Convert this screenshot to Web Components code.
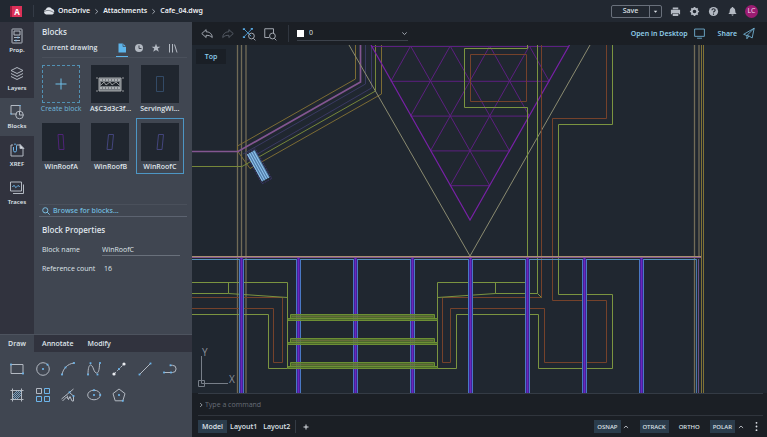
<!DOCTYPE html>
<html lang="en">
<head>
<meta charset="utf-8">
<title>Cafe_04.dwg</title>
<style>
html,body{margin:0;height:100%;background:#1b1f25}
body{font-family:"Open Sans","Noto Sans",sans-serif;font-size:7px;line-height:10px;color:#dfe3e9;
--head:#222831;--rail:#31333e;--panel:#404651;--bar:#1b1f25;--canvas:#202730;--blue:#6fb7dc;--line:#b3b9c2;--pill:#2b3c4b}
</style>
</head>
<body>
<cad-app></cad-app>
<script>
const base = `*{box-sizing:border-box}
button,input,select{font:inherit;color:inherit;background:none;border:0;padding:0;margin:0;border-radius:0;outline:0;min-width:0}
button{display:flex;align-items:center;justify-content:center}a{color:inherit;text-decoration:none}h2,h3{margin:0;font-size:8px;font-weight:600}`;

function define(name, css, html) {
  customElements.define(name, class extends HTMLElement {
    connectedCallback() {
      if (this.shadowRoot) return;
      const root = this.attachShadow({ mode: "open" });
      root.innerHTML = `<style>${base}${css}</style>${typeof html === "function" ? html(this) : html}`;
    }
  });
}

const dot = (x, y, c = "#6db5ea") => `<rect x="${x - .9}" y="${y - .9}" width="1.8" height="1.8" fill="${c}" stroke="none"/>`;
const icons = {
  prop: [16, `<rect x="3" y="1" width="10" height="14" rx=".5"/><path d="M5 3h6v4H5zM5 9.500h6M5 12.500h6"/><path d="M9 8.500v2M7 11.500v2" stroke="#6db5ea"/>`],
  layers: [16, `<path d="M8 1.500l6 3-6 3-6-3zM2 7.500l6 3 6-3M2 10.500l6 3 6-3"/>`],
  blocks: [16, `<path d="M8 10H2V1.500h9V7"/><circle cx="10.500" cy="11" r="3.800"/><path d="M10.500 7v4h4"/><path d="M1.200 10h1.600M10.200 1.500h1.600" stroke="#6db5ea"/>`],
  xref: [16, `<path d="M4 3H2V14H14V7M8 3h3.500"/><path d="M11 2.500l4 4h-4z" fill="#dfe3e9"/><path d="M4.500 5v3.500a1.500 1.500 0 0 0 3 0V3.500a1.500 1.500 0 0 0-2.500-1" stroke="#6db5ea"/>`],
  traces: [16, `<path d="M1.500 2h11v9h-11z"/><path d="M14.500 4.500V13.500H4" /><path d="M3.500 7c1-2 2-2 2.500-.500s1 1.500 2 0 2-1 2.500.500" stroke="#6db5ea"/>`],
  file: [10, `<path d="M1.500 .500h4.500L9 3.500V9.500H1.500z" fill="#5db4ea" stroke="none"/><path d="M6 .500V3.500H9" stroke="#404651" stroke-width=".7"/>`],
  clock: [10, `<circle cx="5" cy="5" r="4" fill="#b3b9c2" stroke="none"/><path d="M5 2.500V5.500H7.500" stroke="#404651"/>`],
  star: [10, `<path d="M5 .7l1.200 3h3.200L6.800 5.600l1 3.200L5 6.900 2.200 8.800l1-3.200L.6 3.700h3.200z" fill="#b3b9c2" stroke="none"/>`],
  books: [10, `<path d="M1.500 1v8.500M4.500 1v8.500M6.500 1.500l2.500 8"/>`],
  undo: [16, `<path d="M7 3L2 7.500 7 12V9.500c3 0 5 .5 7 2.500 0-4-3-6.500-7-6.500z"/>`],
  redo: [16, `<path d="M9 3l5 4.500L9 12V9.500c-3 0-5 .5-7 2.500C2 8 5 5.500 9 5.500z" stroke="#5a616c"/>`],
  zoomx: [16, `<path d="M2.500 2.500l8 8M11 2.500L2.500 11M5 5" stroke="#55a4dc"/><path d="M1 1.500h2.500v2H1zM10 1h2.500v2H10zM1 10.500h2.500v2H1z" fill="#55a4dc" stroke="none"/><circle cx="10.800" cy="10.300" r="3.300"/><path d="M13 13l2.300 2.300"/>`],
  zoomw: [16, `<path d="M7 12H2V2h10v5"/><circle cx="10.800" cy="10.300" r="3.300"/><path d="M13 13l2.300 2.300"/>`],
  monitor: [16, `<path d="M2 2.500h12v9H2zM5 13.800h6" stroke="#79bde0"/>`],
  plane: [16, `<path d="M2 9L15 1.500 12.500 13.500 8.500 11 6 14.500V10.500L15 1.500M6 10.500L2 9M6 10.500l2.500.5" stroke="#79bde0"/>`],
  cloud: [14, `<path d="M3.500 11a3 3 0 0 1-.3-5.800 4 4 0 0 1 7.300-.4 3.200 3.200 0 0 1 .5 6.200z" fill="#dfe3e9" stroke="none"/><path d="M.8 8.500c3-3 7-3 12 .5" stroke="#222831" stroke-width=".6"/>`],
  print: [12, `<path d="M3 1.500h6v2H3zM1 4h10v5H9.500V7.500h-7V9H1zM3 8.300h6v2.700H3z" fill="#b3b9c2" stroke="none"/>`],
  gear: [12, `<circle cx="6" cy="6" r="3" stroke-width="2"/><path d="M6 1v1.500M6 9.500V11M1 6h1.500M9.500 6H11M2.500 2.500l1 1M8.500 8.500l1 1M9.500 2.500l-1 1M3.500 8.500l-1 1" stroke-width="1.800"/>`],
  help: [12, `<circle cx="6" cy="6" r="5" fill="#b3b9c2" stroke="none"/><path d="M4.300 4.700c0-2.200 3.500-2.200 3.500-.1C7.800 5.800 6 5.700 6 7.200M6 8.300v1.200" stroke="#222831" stroke-width="1.200"/>`],
  bell: [12, `<path d="M6 1c.7 0 .9.500.9 1C9 2.500 9 5 9.200 7l1.300 1.700h-9L2.800 7C3 5 3 2.500 5.100 2c0-.5.200-1 .9-1zM4.800 9.300h2.400a1.200 1.200 0 0 1-2.400 0z" fill="#b3b9c2" stroke="none"/>`],
  down: [8, `<path d="M1.500 2.800L4 5.200l2.500-2.400"/>`], up: [8, `<path d="M1.200 5.300L4 2.700l2.800 2.600" stroke="#dfe3e9"/>`],
  right: [8, `<path d="M2.800 1.500L5.500 4 2.800 6.500"/>`], tri: [8, `<path d="M2 3h4L4 5.500z" fill="#dfe3e9" stroke="none"/>`],
  search: [8, `<circle cx="3.300" cy="3.300" r="2.600" stroke="#79bde0"/><path d="M5.200 5.200l2.500 2.500" stroke="#79bde0"/>`],
  plus: [8, `<path d="M4 1.500v5M1.500 4h5" stroke="#dfe3e9"/>`],
  more: [12, `<circle cx="6" cy="2" r="1" fill="#dfe3e9" stroke="none"/><circle cx="6" cy="6" r="1" fill="#dfe3e9" stroke="none"/><circle cx="6" cy="10" r="1" fill="#dfe3e9" stroke="none"/>`],
  rect: [16, `<path d="M2 3.500h12v9H2z"/>${dot(2, 3.5)}${dot(14, 12.5)}`],
  circle: [16, `<circle cx="8" cy="8" r="6.300"/>${dot(8, 8)}${dot(12.5, 3.6)}`],
  arc: [16, `<path d="M2 13.500C3.500 7 7.500 3 14 2"/>${dot(2, 13.5)}${dot(5.5, 6.5)}${dot(14, 2)}`],
  spline: [16, `<path d="M2 13.500C2 2 5.500 2 7.500 8s6 6.500 6-5.500"/>${dot(2, 13.5)}${dot(4.5, 2.2)}${dot(11.5, 13.5)}${dot(14, 2)}`],
  pline: [16, `<path d="M3 13L13 3" stroke-dasharray="3 1.500"/><circle cx="3" cy="13" r="1.600" fill="#e8ebef" stroke="none"/><circle cx="13" cy="3" r="1.600" fill="#e8ebef" stroke="none"/>${dot(8, 8)}`],
  line: [16, `<path d="M2.500 13.500L13.500 2.500"/>${dot(2.500, 13.5)}${dot(13.5, 2.5)}`],
  poly: [16, `<path d="M2 11.500h8.500a3.600 3.600 0 0 0 0-7.200H8.500"/>${dot(2, 11.5)}${dot(9, 11.5)}${dot(8.5, 4.3)}`],
  hatch: [16, `<path d="M3.500 1.500v13M12.500 1.500v13M1.500 3.500h13M1.500 12.500h13"/><path d="M4 8l4-4M4 12l8-8M8 12l4-4M4 10l6-6M6 12l6-6" stroke="#83b5dd" stroke-width=".8"/>`],
  array: [16, `<path d="M1.500 1.500h5v5h-5z"/><path d="M9.500 1.500h5v5h-5zM1.500 9.500h5v5h-5zM9.500 9.500h5v5h-5z" stroke="#6db5ea"/>`],
  sweep: [16, `<path d="M1.500 12L13.500 2M2.500 14L6.500 10 8.500 12.500 7 8.500M8.500 12.500L10 9.500l2 4.500h1.500V9L9.500 5.500"/>${dot(9.5, 5.3)}${dot(13.5, 9)}`],
  ellipse: [16, `<ellipse cx="8" cy="8" rx="6.300" ry="4.800"/>${dot(8, 8)}${dot(8, 3.2)}${dot(14.2, 8)}`],
  pentagon: [16, `<path d="M8 2l6 4.600-2.200 7.200H4.200L2 6.600z"/>${dot(8, 8)}${dot(11.800, 13.8)}`]
};
define("cad-icon", `:host{display:block;flex:none;width:var(--s,16px);height:var(--s,16px)}svg{display:block;width:100%;height:100%}`, el => {
  const [box, shape] = icons[el.getAttribute("name")];
  return `<svg viewBox="0 0 ${box} ${box}" fill="none" stroke="#b3b9c2" stroke-width="1" aria-hidden="true">${shape}</svg>`;
});

define("cad-header", `:host{display:flex;align-items:center;height:22px;background:var(--head);padding:0 9px 0 10px;font-family:"Noto Sans",sans-serif;font-weight:600;font-size:7px}
.logo{width:12px;height:11px;background:#dc3158;border-left:2px solid #a11c3e;color:#fff;font-size:8px;line-height:11px;font-weight:700;text-align:center}
nav{display:flex;align-items:center;margin-left:11px;border-left:1px solid #343b46;padding-left:9px;gap:3px;flex:1;color:#eceff3}
cad-icon{--s:7px}.c{--s:12px}
.save{display:flex;border:1px solid #69707b;border-radius:2px;height:13px;font-weight:500}.save button{width:37px}.save button+button{width:12px;border-left:1px solid #69707b}
.tools{display:flex;gap:8px;margin:0 7px 0 8px}.tools cad-icon{--s:11px}
.me{width:13px;height:13px;border-radius:50%;background:#9c1c72;color:#f2d6ea;font-size:7px;font-weight:400}`,
`<div class="logo">A</div><nav aria-label="Path"><cad-icon class="c" name="cloud"></cad-icon><a href="#">OneDrive</a><cad-icon name="right"></cad-icon><a href="#">Attachments</a><cad-icon name="right"></cad-icon><a href="#">Cafe_04.dwg</a></nav>
<div class="save"><button>Save</button><button aria-label="Save options"><cad-icon name="tri"></cad-icon></button></div>
<div class="tools"><button aria-label="Print"><cad-icon name="print"></cad-icon></button><button aria-label="Settings"><cad-icon name="gear"></cad-icon></button><button aria-label="Help"><cad-icon name="help"></cad-icon></button><button aria-label="Alerts"><cad-icon name="bell"></cad-icon></button></div><button class="me">LC</button>`);

define("rail-item", `:host{display:block;height:38px}:host([selected]){background:var(--panel)}button{flex-direction:column;width:100%;height:100%;gap:1px;font-weight:600;font-size:6px}`,
  el => `<button><cad-icon name="${el.getAttribute("icon")}"></cad-icon><slot></slot></button>`);
define("tool-rail", `:host{display:flex;flex-direction:column;width:34px;flex:none;background:var(--rail);font-family:"Noto Sans",sans-serif}`,
`<rail-item icon="prop">Prop.</rail-item><rail-item icon="layers">Layers</rail-item><rail-item icon="blocks" selected>Blocks</rail-item><rail-item icon="xref">XREF</rail-item><rail-item icon="traces">Traces</rail-item>`);

const thumbs = {
  add: `<path d="M19 13.500v11M13.500 19h11" stroke="#6fc0ea"/>`,
  detail: `<path d="M8 13h22v13H8z" fill="#777c82" stroke="#a5a8ab"/><path d="M9 15h20M9 23h20" stroke="#e0e2e3" stroke-dasharray="2 1"/><path d="M10 17h18v4H10z" fill="#20252c" stroke="none"/><path d="M10 20l3-3 2 3 4-3 2 3 4-3 3 3M6 12v2M32 12v2M6 25v2M32 25v2" stroke="#c5c7c9" stroke-width=".7"/>`,
  serving: `<path d="M15.500 11.500h7v15h-7z" stroke="#334a66"/>`,
  roofa: `<path d="M16 11.500h5l1 15h-5z" stroke="#4f2478"/>`,
  roofb: `<path d="M17.500 11.500h5L21 26.500h-5z" stroke="#43457c"/>`,
  roofc: `<path d="M17.500 11.500h5L21 26.500h-5z" stroke="#43457c"/>`
};
define("block-tile", `:host{display:block;border:1px solid transparent;height:56px}:host([selected]){border-color:#4d96c4}
button{flex-direction:column;width:100%;height:100%;gap:1px;padding-top:2px;font-weight:600;font-size:7px;white-space:nowrap}
svg{width:38px;height:38px;background:#20262f;flex:none}:host([dashed]) svg{background:none;outline:1px dashed #5191b4;outline-offset:-1px}:host([dashed]) button{color:var(--blue);font-weight:400}`,
  el => `<button><svg viewBox="0 0 38 38" fill="none" stroke-width="1" aria-hidden="true">${thumbs[el.getAttribute("thumb")]}</svg><span><slot></slot></span></button>`);

define("blocks-panel", `:host{display:flex;flex-direction:column;flex:1;min-width:0;background:var(--panel);padding-top:5px}
.top{padding:0 8px}.row{display:flex;align-items:flex-end;justify-content:space-between;border-bottom:1px solid #4a505b;margin:3px 5px 0 8px;padding-right:8px;height:18px;font-weight:600}
.row>span{padding-bottom:4px}.tabs{display:flex;gap:5px}.tabs button{width:12px;height:16px;padding-bottom:2px;border-bottom:1px solid transparent}.tabs cad-icon{--s:10px}.tabs .on{border-color:#5db4ea}
.grid{display:grid;grid-template-columns:repeat(3,1fr);column-gap:1px;row-gap:2px;padding:2px 8px 0 3px}
.find{display:flex;align-items:center;justify-content:flex-start;gap:3px;margin:30px 5px 0;height:13px;border-top:1px solid #4a505b;border-bottom:1px solid #5c6370;padding-left:3px;color:var(--blue);font-weight:600}
.find cad-icon{--s:8px}h3{margin:8px 8px 0}
form{display:grid;grid-template-columns:60px 1fr;row-gap:6px;padding:8px 12px 0 8px;align-items:center}
input{height:13px;border-bottom:1px solid #69707b;width:100%}output{padding-left:2px}label{line-height:13px}`,
`<h2 class="top">Blocks</h2><div class="row"><span>Current drawing</span><div class="tabs"><button class="on" aria-label="Current drawing"><cad-icon name="file"></cad-icon></button><button aria-label="Recent"><cad-icon name="clock"></cad-icon></button><button aria-label="Favorites"><cad-icon name="star"></cad-icon></button><button aria-label="Libraries"><cad-icon name="books"></cad-icon></button></div></div>
<div class="grid"><block-tile thumb="add" dashed>Create block</block-tile><block-tile thumb="detail">A$C3d3c3f...</block-tile><block-tile thumb="serving">ServingWi...</block-tile><block-tile thumb="roofa">WinRoofA</block-tile><block-tile thumb="roofb">WinRoofB</block-tile><block-tile thumb="roofc" selected>WinRoofC</block-tile></div>
<button class="find"><cad-icon name="search"></cad-icon>Browse for blocks...</button>
<h3>Block Properties</h3><form><label for="n">Block name</label><input id="n" value="WinRoofC"><label for="r">Reference count</label><output id="r">16</output></form>`);

define("draw-tools", `:host{display:block;height:103px;background:var(--panel)}
.tabs{display:flex;height:18px;background:var(--rail);border-top:1px solid #4d535e;font-weight:600}.tabs button{padding:0 6px 0 8px}.tabs .on{background:var(--panel);width:34px;padding:0}
.grid{display:grid;grid-template-columns:repeat(7,16px);justify-content:space-between;row-gap:10px;padding:9px 14px 0 9px}`,
`<div class="tabs"><button class="on">Draw</button><button>Annotate</button><button>Modify</button></div><div class="grid">${["rect","circle","arc","spline","pline","line","poly","hatch","array","sweep","ellipse","pentagon"].map(n => `<button aria-label="${n}"><cad-icon name="${n}"></cad-icon></button>`).join("")}</div>`);

define("view-toolbar", `:host{display:flex;align-items:center;height:23px;background:var(--bar);padding:0 12px 0 8px}
.g{display:flex;gap:7px}.g cad-icon{--s:14px}.layer{display:flex;align-items:center;gap:5px;width:111px;height:15px;margin-left:8px;border-bottom:1px solid #3c424b}.layer cad-icon{--s:7px}
.div{width:1px;height:17px;background:#30363f;margin-left:11px}i{width:7px;height:7px;background:#fff}select{appearance:none;flex:1;height:12px}
.r{display:flex;align-items:center;gap:12px;margin-left:auto;color:#8ecbe8;font-family:"Noto Sans",sans-serif;font-weight:600}.r a,.r button{display:flex;align-items:center;gap:5px}.r cad-icon{--s:13px}`,
`<div class="g"><button aria-label="Undo"><cad-icon name="undo"></cad-icon></button><button aria-label="Redo"><cad-icon name="redo"></cad-icon></button><button aria-label="Zoom extents"><cad-icon name="zoomx"></cad-icon></button><button aria-label="Zoom window"><cad-icon name="zoomw"></cad-icon></button></div><span class="div"></span>
<div class="layer"><i></i><select aria-label="Layer"><option>0</option></select><cad-icon name="down"></cad-icon></div>
<div class="r"><a href="#">Open in Desktop<cad-icon name="monitor"></cad-icon></a><button>Share<cad-icon name="plane"></cad-icon></button></div>`);

function trellis() {
  let d = "";
  for (let k = 1; k <= 5; k++) {
    const w = 19.8 * k, y = 220.5 - 34.8 * k, far = 470 + 19.8 * (5 - 2 * k);
    d += `M${470 - w} ${y}H${470 + w}`;
    if (k < 5) d += `M${470 - w} ${y}L${far} 46M${470 + w} ${y}L${940 - far} 46`;
  }
  return d;
}
const columns = [241.5, 298.5, 355.5, 412.5, 470.5, 527.5, 584.5, 641.5];
const bays = [192, ...columns, 698];
define("plan-drawing", `:host{display:block;position:relative;flex:1;min-height:0;background:var(--canvas);overflow:hidden}
svg{display:block;width:100%;height:100%}
button{position:absolute;left:4px;top:4px;width:30px;height:15px;background:#1a1f26;color:#8ed0ee;font-weight:600}`,
`<svg viewBox="192 45 575 348" preserveAspectRatio="xMinYMin slice" fill="none" stroke-width="1" role="img" aria-label="Floor plan">
<g stroke="#716b57"><path d="M237.500 45V393M241.500 45V257M246 45V393M694.500 45V393M699 45V257" stroke-width="1.300"/></g>
<path d="M701.500 45V393M703.500 45V393" stroke="#807236"/>
<path d="M355.500 45V79L237.500 146V151L250 168.500L381.500 94V45" stroke="#7d6c34"/>
<path d="M192 166.500H242L375.500 91V45" stroke="#76873a"/>
<path d="M365.500 45V84L243 154M371.500 45V88L247 160" stroke="#3a3a62"/>
<path d="M192 151.500H238L360.500 82V45" stroke="#835691" stroke-width="1.700"/>
<path d="${trellis()}" stroke="#5d2080"/><path d="M371 45L470 220L569.500 45" stroke="#7821a6" stroke-width="1.200"/>
<path d="M349 45L470 256L590 45" stroke="#8b8b70"/>
<g stroke="#75422b"><path d="M470.500 54.500H526.500V101.500H470.500z"/><path d="M606.500 45V118.500H552.500V300.500H606.500V362.500H544.500V308.500H450.500V362.500H442.500V297.500H541.500V45M192 297.500H282.500V362.500H273.500V308.500H192"/></g>
<g stroke="#7b9440"><path d="M527.500 45V48.500H464.500V107.500H527.500V282.500H437.500V368.500H456.500V314.500H538.500V368.500H612.500V294.500H558.500V124.500H612.500V45M537.500 45V293.500H495.500V282.500M495.500 293.500L437.500 297.500M537.500 293.500L541.500 297.500M192 282.500H287.500V368.500H268.500V314.500H192M228.500 282.500V293.500M192 293.500H228.500L287.500 297.500"/></g>
${columns.map(x => `<path d="M${x - 2} 259V393M${x + 2} 259V393" stroke="#4a78c4"/><path d="M${x} 258V393" stroke="#4321a0" stroke-width="3"/><path d="M${x} 258V393" stroke="#6d28b8"/>`).join("")}
<path d="${bays.slice(0, -1).map((x, i) => `M${x + (i ? 2 : 0)} 259.500H${bays[i + 1] - 2}`).join("")}" stroke="#5590bc"/>
<path d="M696.500 259V393" stroke="#4776a8"/><path d="M698.500 259V393" stroke="#67518a"/>
${[314.5, 338.5, 362.5].map(y => `<path d="M290.500 ${y}H434.500V${y + 4}H437.500V${y + 6}H288V${y + 4}H290.500z" fill="#587a2c" fill-opacity=".8" stroke="#6d8f34"/><path d="M292 ${y + 2}H433" stroke="#7d6f4a" stroke-width=".6"/><path d="M288 ${y + 4}H437" stroke="#6d8f34"/>`).join("")}
<path d="M192 256.500H701" stroke="#a89170"/><path d="M192 257.500H701" stroke="#835691"/>
<g transform="translate(250.500 152.500) rotate(-29)"><path d="M-4 0H5V31H-4z" fill="#517ca9"/><path d="M-3.500 0V31M-1.200 0V31M1.200 0V31M3.500 0V31" stroke="#91c5ed"/><path d="M-5-1H6V33H-5z" stroke="#4a3c85" stroke-width=".6" stroke-dasharray="2 1"/></g>
<g stroke="#777e88"><path d="M201.500 356V383.500H228M198.500 380.500H204.500V386.500H198.500z"/></g>
<g fill="#8b919b" font-size="10"><text x="202" y="356">Y</text><text x="229" y="383">X</text></g>
</svg><button>Top</button>`);

define("command-line", `:host{display:flex;align-items:center;gap:1px;height:23px;margin:0 4px 0 6px;border-top:1px solid #343b45;border-bottom:1px solid #30353d}cad-icon{--s:6px}input{flex:1;height:12px}input::placeholder{color:#686e77;opacity:1}`,
`<cad-icon name="right"></cad-icon><input aria-label="Command" placeholder="Type a command">`);

define("status-bar", `:host{display:flex;align-items:center;height:21px;padding:0 5px 0 6px;font-weight:600}
button{height:13px;padding:0 3px}.on{background:var(--pill)}cad-icon{--s:8px}.l{display:flex;align-items:center}.l .on{padding:0 4px}.l .add{border-left:1px solid #353b44;padding:0 0 0 6px;margin-left:2px}
.r{display:flex;align-items:center;margin-left:auto;font-family:"Noto Sans",sans-serif;font-size:6px;font-weight:500}.r .i{padding:0;width:11px;margin-right:8px}.r .i cad-icon{--s:6px}.r .more{padding:0}.r .more cad-icon{--s:11px}.gap{margin-right:7px}.r .end{margin-right:5px}`,
`<div class="l"><button class="on">Model</button><button>Layout1</button><button>Layout2</button><button class="add" aria-label="New layout"><cad-icon name="plus"></cad-icon></button></div>
<div class="r"><button class="on" aria-pressed="true">OSNAP</button><button class="i" aria-label="Snap options"><cad-icon name="up"></cad-icon></button><button class="on gap" aria-pressed="true">OTRACK</button><button class="gap" aria-pressed="false">ORTHO</button><button class="on" aria-pressed="true">POLAR</button><button class="i end" aria-label="Polar options"><cad-icon name="up"></cad-icon></button><button class="more" aria-label="More"><cad-icon name="more"></cad-icon></button></div>`);

define("cad-app", `:host{display:flex;flex-direction:column;min-height:100vh}
main{display:flex;flex:1;min-height:0}.side{display:flex;flex-direction:column;width:192px;flex:none}.up{display:flex;flex:1;min-height:0}.work{display:flex;flex-direction:column;flex:1;min-width:0;background:var(--bar)}`,
`<cad-header></cad-header><main><div class="side"><div class="up"><tool-rail></tool-rail><blocks-panel></blocks-panel></div><draw-tools></draw-tools></div>
<div class="work"><view-toolbar></view-toolbar><plan-drawing></plan-drawing><command-line></command-line><status-bar></status-bar></div></main>`);
</script>
</body>
</html>
